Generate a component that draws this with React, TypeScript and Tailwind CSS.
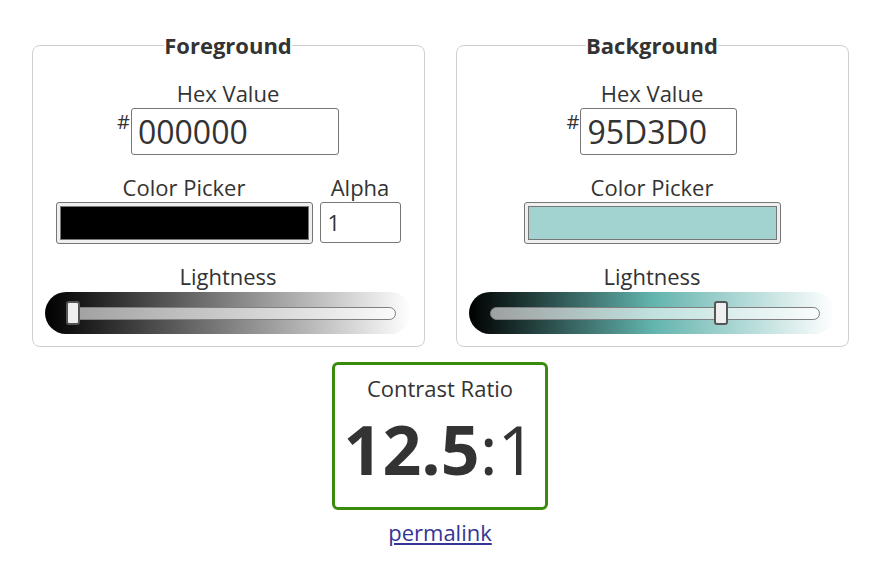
import React from 'react';

const font = { fontFamily: '"Open Sans", "Noto Sans", sans-serif' };

interface PanelProps {
  title: string;
  hex: string;
  swatch: string;
  hexWidth: string;
  alpha?: boolean;
  gradient: string;
  thumb: string;
}

function Swatch({ color }: { color: string }) {
  return (
    <div className="h-[42px] w-[257px] rounded-[3px] border border-[#767676] bg-[#efefef] p-[3px]">
      <div
        className="h-full w-full border border-[#777]"
        style={{ backgroundColor: color }}
      />
    </div>
  );
}

function Panel({ title, hex, swatch, hexWidth, alpha, gradient, thumb }: PanelProps) {
  return (
    <fieldset className="w-[393px] rounded-[8px] border border-[#cfcfcf] px-0 pb-[12px]">
      <legend className="mx-auto px-0 text-[22px] font-bold leading-[28px]">{title}</legend>
      <div className="mt-[19px] flex flex-col items-center">
        <span className="text-[22px] leading-[30px]">Hex Value</span>
        <div className="flex items-start">
          <span className="mt-[2px] pr-[1px] text-[20px] leading-[24px]">#</span>
          <div
            className={`flex h-[47px] items-center rounded-[3px] border border-[#767676] px-[6px] text-[32px] ${hexWidth}`}
          >
            {hex}
          </div>
        </div>

        <div className="mt-[17px] flex gap-[7px]">
          <div className="flex flex-col items-center">
            <span className="text-[22px] leading-[30px]">Color Picker</span>
            <Swatch color={swatch} />
          </div>
          {alpha && (
            <div className="flex flex-col items-center">
              <span className="text-[22px] leading-[30px]">Alpha</span>
              <div className="flex h-[41px] w-[81px] items-center rounded-[3px] border border-[#767676] px-[7px] text-[22px]">
                1
              </div>
            </div>
          )}
        </div>

        <span className="mt-[17px] text-[22px] leading-[30px]">Lightness</span>
        <div
          className="relative mt-[1px] flex h-[42px] w-[366px] items-center rounded-full pl-[21px] pr-[15px]"
          style={{ background: gradient }}
        >
          <div className="h-[13px] w-full rounded-full border border-[#808080] bg-white/60" />
          <div
            className="absolute top-[9px] h-[24px] w-[14px] rounded-[3px] border-2 border-[#555] bg-[#efefef]"
            style={{ left: thumb }}
          />
        </div>
      </div>
    </fieldset>
  );
}

export default function App() {
  return (
    <div className="flex w-[880px] flex-col items-center pt-[31px] text-[#333]" style={font}>
      <div className="flex gap-[31px]">
        <Panel
          title="Foreground"
          hex="000000"
          swatch="#000000"
          hexWidth="w-[208px]"
          alpha
          gradient="linear-gradient(to right, #000 0%, #fff 100%)"
          thumb="21px"
        />
        <Panel
          title="Background"
          hex="95D3D0"
          swatch="#a3d3d0"
          hexWidth="w-[157px]"
          gradient="linear-gradient(to right, #000 0%, #62b3ad 50%, #ffffff 100%)"
          thumb="245px"
        />
      </div>

      <div className="mt-[15px] flex h-[148px] w-[216px] flex-col items-center rounded-[6px] border-[3px] border-[#3a8a0c]">
        <span className="mt-[8px] text-[22px] leading-[30px]">Contrast Ratio</span>
        <div className="mt-[14px] text-[68px] leading-[64px]">
          <span className="font-bold">12.5</span>
          <span>:1</span>
        </div>
      </div>

      <a href="#" className="mt-[7px] text-[22px] leading-[30px] text-[#343597] underline">
        permalink
      </a>
    </div>
  );
}
